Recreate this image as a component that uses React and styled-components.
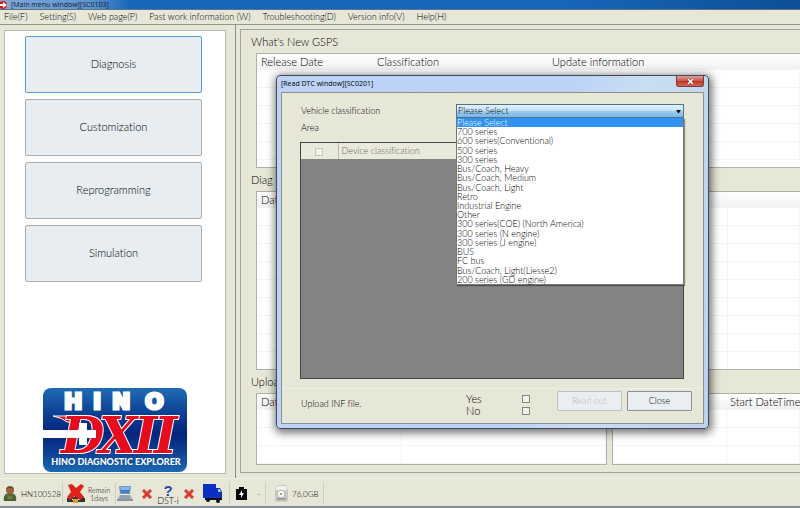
import React, { useState } from "react";
import styled, { createGlobalStyle, css } from "styled-components";

const vehicles = [
  "Please Select",
  "700 series",
  "600 series(Conventional)",
  "500 series",
  "300 series",
  "Bus/Coach, Heavy",
  "Bus/Coach, Medium",
  "Bus/Coach, Light",
  "Retro",
  "Industrial Engine",
  "Other",
  "300 series(COE) (North America)",
  "300 series (N engine)",
  "300 series (J engine)",
  "BUS",
  "FC bus",
  "Bus/Coach, Light(Liesse2)",
  "200 series (GD engine)",
];

const menus = [
  "File(F)",
  "Setting(S)",
  "Web page(P)",
  "Past work information (W)",
  "Troubleshooting(D)",
  "Version info(V)",
  "Help(H)",
];

function ListTable({ columns, rows, label }) {
  return (
    <TableFrame>
      <Table aria-label={label}>
        <colgroup>
          {columns.map((c, i) => (
            <Col key={i} $width={c.width} />
          ))}
        </colgroup>
        <thead>
          <tr>
            {columns.map((c, i) => (
              <th key={i}>{c.title}</th>
            ))}
          </tr>
        </thead>
        <tbody>
          {Array.from({ length: rows }, (_, r) => (
            <tr key={r}>
              {columns.map((c, i) => (
                <td key={i} />
              ))}
            </tr>
          ))}
        </tbody>
      </Table>
    </TableFrame>
  );
}

function Logo() {
  return (
    <LogoSvg viewBox="0 0 144 84" role="img" aria-label="Hino DX2">
      <defs>
        <linearGradient id="logoBg" x1="0" y1="0" x2="0" y2="1">
          <stop offset="0" stopColor="#1f6cb5" />
          <stop offset="0.3" stopColor="#0c3f93" />
          <stop offset="0.55" stopColor="#04247d" />
          <stop offset="0.8" stopColor="#0d4597" />
          <stop offset="1" stopColor="#1c69b2" />
        </linearGradient>
      </defs>
      <rect width="144" height="84" rx="8" fill="url(#logoBg)" />
      <text
        x="21 50 69 102"
        y="21"
        fontFamily="DejaVu Sans"
        fontWeight="700"
        fontSize="22"
        fill="#fff"
        stroke="#fff"
        strokeWidth="3"
      >
        HINO
      </text>
      <path d="M10 28 H36 L31 34 L24 34 Q20 30 10 28 Z" fill="#e60c1e" stroke="#fff" strokeWidth="1" />
      <g
        fontFamily="DejaVu Serif"
        fontWeight="700"
        fontStyle="italic"
        fontSize="50"
        fill="#e60c1e"
        stroke="#fff"
        strokeWidth="2"
        paintOrder="stroke"
      >
        <text x="18" y="65">D</text>
        <text x="56" y="65">X</text>
        <text x="91 111" y="65">II</text>
      </g>
      <path d="M0 42 H36 V35 H44 V42 H53 V50 H44 V57 H36 V50 H0 Z" fill="#fff" />
      <text
        x="73"
        y="77"
        textAnchor="middle"
        fontFamily="Lato"
        fontWeight="900"
        fontSize="9"
        fill="#fff"
      >
        HINO DIAGNOSTIC EXPLORER
      </text>
    </LogoSvg>
  );
}

const UserIcon = () => (
  <svg width="14" height="16" viewBox="0 0 14 16">
    <path d="M1 15 C0 10 2 7 7 7 C12 7 14 10 13 15 Z" fill="#4f6038" />
    <path d="M4 8 L7 11 L10 8 L9 13 H5 Z" fill="#75824a" />
    <circle cx="7" cy="4" r="4" fill="#9a6238" />
    <path d="M3 3 C4 0 10 0 11 3 L9 2 H5 Z" fill="#5d4328" />
  </svg>
);

const NetworkIcon = () => (
  <svg width="20" height="20" viewBox="0 0 20 20">
    <path d="M2 14 H18 M10 12 V17 M4 17 H16" stroke="#3a3532" strokeWidth="2" />
    <rect x="1" y="14" width="5" height="4" fill="#303438" />
    <rect x="14" y="14" width="5" height="4" fill="#303438" />
    <rect x="7" y="15" width="5" height="4" fill="#d8a032" />
    <path d="M2 1 L6 0 L10 4 L15 0 L18 2 L14 8 L18 13 L14 16 L9 12 L4 16 L1 13 L5 8 Z" fill="#e02318" />
  </svg>
);

const LaptopIcon = () => (
  <svg width="16" height="15" viewBox="0 0 16 15">
    <path d="M2 0 H14 L13 8 H3 Z" fill="#7f98b4" />
    <path d="M3 1 H13 L12 7 H4 Z" fill="#3f7fc4" />
    <path d="M3 1 H13 L12 4 H4 Z" fill="#86b6e2" />
    <path d="M2 9 H14 L16 13 H0 Z" fill="#c2cad1" />
    <path d="M0 13 H16 V15 H0 Z" fill="#8796a6" />
    <path d="M3 10 H13 M2 12 H14" stroke="#66788c" strokeWidth="1" />
  </svg>
);

const CrossIcon = () => (
  <svg width="10" height="10" viewBox="0 0 10 10">
    <path d="M1 1 L9 9 M9 1 L1 9" stroke="#dc3a2c" strokeWidth="3" />
  </svg>
);

const TruckIcon = () => (
  <svg width="20" height="19" viewBox="0 0 20 19">
    <path d="M0 0 H13 V14 H0 Z" fill="#0a2fc4" />
    <path d="M13 4 H17 L19 8 V14 H13 Z" fill="#0a2fc4" />
    <path d="M15 5 H17 L18 8 H15 Z" fill="#a8c0ec" />
    <rect x="2" y="14" width="17" height="2" fill="#111" />
    <circle cx="5" cy="16" r="2" fill="#111" />
    <circle cx="15" cy="17" r="2" fill="#111" />
  </svg>
);

const BatteryIcon = () => (
  <svg width="11" height="13" viewBox="0 0 11 13">
    <path d="M3 0 H8 V2 H11 V13 H0 V2 H3 Z" fill="#070707" />
    <path d="M6 3 L3 8 H5 L5 11 L8 6 H6 Z" fill="#fff" />
  </svg>
);

const DiskIcon = () => (
  <svg width="13" height="17" viewBox="0 0 13 17">
    <path d="M2 0 H11 L13 5 V15 L12 17 H1 L0 15 V5 Z" fill="#c9c9c4" />
    <path d="M2 1 H11 L12 5 H1 Z" fill="#f2f2ee" />
    <circle cx="6" cy="9" r="4" fill="#f4f4f1" stroke="#b4b4b0" />
    <circle cx="6" cy="9" r="1" fill="#83837f" />
    <path d="M2 14 H11" stroke="#a0a09c" strokeWidth="2" />
  </svg>
);

const AppIcon = () => (
  <svg width="8" height="8" viewBox="0 0 8 8">
    <circle cx="3" cy="4" r="4" fill="#d51d24" />
    <path d="M0 3 H3 V1 L7 4 L3 7 V5 H0 Z" fill="#fff" />
  </svg>
);

function ReadDtcDialog() {
  const [vehicle, setVehicle] = useState(vehicles[0]);

  return (
    <Dialog role="dialog" aria-label="Read DTC window">
      <DialogTitle>
        <span>[Read DTC window][SC0201]</span>
        <CloseX type="button" aria-label="Close window">
          <svg width="7" height="5" viewBox="0 0 8 6">
            <path d="M1 0 L7 6 M7 0 L1 6" stroke="#6c2a26" strokeWidth="3" />
            <path d="M1 0 L7 6 M7 0 L1 6" stroke="#fff" strokeWidth="2" />
          </svg>
        </CloseX>
      </DialogTitle>
      <DialogBody>
        <FormRow>
          <label htmlFor="vehicle">Vehicle classification</label>
          <Combo>
            <Select
              id="vehicle"
              value={vehicle}
              onChange={(e) => setVehicle(e.target.value)}
            >
              {vehicles.map((v) => (
                <option key={v}>{v}</option>
              ))}
            </Select>
            <Arrow viewBox="0 0 5 3">
              <path d="M0 0 H5 L3 3 H2 Z" fill="#111" />
            </Arrow>
            <Options role="listbox" aria-label="Vehicle classification">
              {vehicles.map((v) => (
                <Option
                  key={v}
                  role="option"
                  aria-selected={v === vehicle}
                  $active={v === vehicle}
                  onClick={() => setVehicle(v)}
                >
                  {v}
                </Option>
              ))}
            </Options>
          </Combo>
        </FormRow>
        <AreaLabel>Area</AreaLabel>
        <DeviceGrid>
          <DeviceTable>
            <thead>
              <tr>
                <th>
                  <Check type="checkbox" aria-label="Select all devices" disabled />
                </th>
                <th>Device classification</th>
              </tr>
            </thead>
          </DeviceTable>
        </DeviceGrid>
        <DialogFooter>
          <span>Upload INF file.</span>
          <Answers>
            <label>
              Yes <Check type="checkbox" />
            </label>
            <label>
              No <Check type="checkbox" />
            </label>
          </Answers>
          <DialogButton type="button" disabled>
            Read out
          </DialogButton>
          <DialogButton type="button">Close</DialogButton>
        </DialogFooter>
      </DialogBody>
    </Dialog>
  );
}

function App() {
  return (
    <Window>
      <GlobalStyle />
      <TitleBar>
        <AppIcon />
        <span>[Main menu window][SC0103]</span>
      </TitleBar>
      <MenuBar>
        {menus.map((m) => (
          <MenuItem key={m} type="button">
            {m}
          </MenuItem>
        ))}
      </MenuBar>
      <Main>
        <Side>
          <SidePanel>
            <MainButton type="button" $selected>
              Diagnosis
            </MainButton>
            <MainButton type="button">Customization</MainButton>
            <MainButton type="button">Reprogramming</MainButton>
            <MainButton type="button">Simulation</MainButton>
            <Logo />
          </SidePanel>
        </Side>
        <Content>
          <Heading>What's New GSPS</Heading>
          <Section $grow={115}>
            <ListTable
              label="What's New GSPS"
              rows={5}
              columns={[
                { title: "Release Date", width: 116 },
                { title: "Classification", width: 175 },
                { title: "Update information" },
              ]}
            />
          </Section>
          <Heading>Diag</Heading>
          <Section $grow={179}>
            <ListTable
              label="Diagnosis"
              rows={9}
              columns={[{ title: "Date", width: 470 }, { title: "" }]}
            />
          </Section>
          <Heading>Upload</Heading>
          <Section $grow={72}>
            <ListTable
              label="Upload"
              rows={3}
              columns={[{ title: "Date", width: 144 }, { title: "" }]}
            />
            <ListTable
              label="Upload times"
              rows={3}
              columns={[{ title: "", width: 113 }, { title: "Start DateTime" }]}
            />
          </Section>
        </Content>
      </Main>
      <StatusBar>
        <Status $width={63} $pad={3}>
          <UserIcon />
          <span>HN100528</span>
        </Status>
        <Status $width={53} $pad={3} $gap={2}>
          <NetworkIcon />
          <Remain>
            Remain
            <br />
            1days
          </Remain>
        </Status>
        <Status $width={114} $pad={1} $gap={9}>
          <LaptopIcon />
          <CrossIcon />
          <Dst>
            <b>?</b>
            <span>DST-i</span>
          </Dst>
          <CrossIcon />
          <TruckIcon />
        </Status>
        <Status $width={36} $pad={6} $gap={10}>
          <BatteryIcon />
          <span>-</span>
        </Status>
        <Status $width={58} $pad={9}>
          <DiskIcon />
          <span>76,0GB</span>
        </Status>
      </StatusBar>
      <ReadDtcDialog />
    </Window>
  );
}

const GlobalStyle = createGlobalStyle`
  * {
    box-sizing: border-box;
  }

  body {
    margin: 0;
    overflow: hidden;
  }

  body,
  button,
  select {
    font-family: Lato, "Liberation Sans", sans-serif;
    font-weight: 300;
    font-size: 9px;
    font-variant-ligatures: none;
    line-height: 12px;
    color: #000;
  }
`;

const Window = styled.div`
  position: relative;
  display: flex;
  flex-direction: column;
  min-height: 100vh;
  background: #e7e7d8;
  border-bottom: 2px solid #7d8f9c;
  overflow: hidden;
`;

const TitleBar = styled.header`
  display: flex;
  align-items: center;
  gap: 3px;
  height: 10px;
  border-bottom: 1px solid #56748c;
  background: linear-gradient(90deg, #7fa9d8 0, #5f93cf 90px, #1766ba 130px, #1766bc 70%, #0d4f94);
  font-family: "Open Sans", sans-serif;
  font-weight: 400;
  font-size: 7px;
  line-height: 9px;
  color: #0c1c30;
`;

const MenuBar = styled.nav`
  display: flex;
  gap: 12px;
  height: 15px;
  padding-left: 4px;
  border-bottom: 1px solid #96968c;
`;

const MenuItem = styled.button`
  padding: 0;
  border: 0;
  background: none;
  white-space: nowrap;
`;

const Main = styled.div`
  flex: 1;
  display: flex;
  min-height: 0;
`;

const Side = styled.aside`
  display: flex;
  width: 236px;
  flex-shrink: 0;
  padding: 5px 9px 4px 4px;
  border-right: 1px solid #8d8d84;
`;

const SidePanel = styled.div`
  flex: 1;
  display: flex;
  flex-direction: column;
  gap: 6px;
  padding: 5px 23px 1px 20px;
  border: 1px solid #b9b9b2;
  background: #fff;
`;

const MainButton = styled.button`
  height: 57px;
  padding-bottom: 3px;
  border: 1px solid ${(p) => (p.$selected ? "#5b9bd3" : "#a9adb0")};
  border-radius: 2px;
  background: #e7edf1;
  font-size: 11px;
`;

const LogoSvg = styled.svg`
  width: 144px;
  height: 84px;
  margin-top: auto;
  margin-left: 18px;
`;

const Content = styled.main`
  flex: 1;
  min-width: 0;
  display: flex;
  flex-direction: column;
  margin: 4px 0 5px 4px;
  padding: 0 0 7px 15px;
  border: 1px solid #a3a399;
  border-right: 0;
`;

const Heading = styled.h2`
  margin: 0 0 0 -5px;
  font-size: 11px;
  font-weight: 300;
  line-height: 23px;
`;

const Section = styled.section`
  flex: ${(p) => p.$grow} 1 0;
  display: flex;
  gap: 5px;
  min-height: 0;
`;

const TableFrame = styled.div`
  flex: 351 1 0;
  min-width: 0;
  border: 1px solid #b0b0a8;
  border-right: 0;
  background: #fff;
  overflow: hidden;

  &:not(:last-child) {
    border-right: 1px solid #b0b0a8;
  }

  & + & {
    flex-grow: 188;
  }
`;

const Table = styled.table`
  width: 100%;
  table-layout: fixed;
  border-collapse: collapse;

  th {
    height: 15px;
    padding: 0 0 0 4px;
    background: linear-gradient(#fff, #f1f1f1);
    font-size: 11px;
    font-weight: 300;
    line-height: 15px;
    text-align: left;
    white-space: nowrap;
  }

  td {
    height: 18px;
    padding: 0;
    border: 1px solid #f4f4f4;
    border-left: 0;
  }
`;

const Col = styled.col`
  width: ${(p) => (p.$width ? p.$width + "px" : "auto")};
`;

const StatusBar = styled.footer`
  display: flex;
  height: 28px;
  padding: 3px 0 1px;
  border-top: 1px solid #f0f0e4;
`;

const Status = styled.div`
  display: flex;
  align-items: center;
  gap: ${(p) => p.$gap || 4}px;
  width: ${(p) => p.$width}px;
  padding-left: ${(p) => p.$pad}px;
  border-right: 1px solid #cfcfc2;
  font-size: 8px;
  white-space: nowrap;

  svg {
    flex-shrink: 0;
  }
`;

const Remain = styled.span`
  font-size: 7px;
  line-height: 8px;
  text-align: center;
`;

const Dst = styled.span`
  display: flex;
  flex-direction: column;
  align-items: center;
  align-self: flex-end;
  width: 24px;
  margin: 0 -5px;

  b {
    font-family: "Liberation Sans", sans-serif;
    font-size: 15px;
    font-weight: 700;
    line-height: 12px;
    color: #27489c;
  }

  span {
    font-size: 9px;
    line-height: 8px;
  }
`;

const Dialog = styled.div`
  position: absolute;
  top: 75px;
  left: 276px;
  width: 433px;
  padding: 0 4px 4px;
  border: 1px solid #3f4c58;
  border-radius: 4px;
  background: linear-gradient(100deg, #bdd2f5, #bcd3f8 60%, #c9def0 75%, #bcd1ee);
  box-shadow: 1px 2px 8px 2px rgba(0, 0, 0, 0.55);
`;

const DialogTitle = styled.div`
  display: flex;
  justify-content: space-between;
  align-items: flex-start;
  height: 16px;
  font-family: "Open Sans", sans-serif;
  font-weight: 400;
  font-size: 7px;
  line-height: 16px;
`;

const CloseX = styled.button`
  display: flex;
  align-items: center;
  justify-content: center;
  width: 28px;
  height: 11px;
  padding: 0;
  border: 1px solid #7c3a38;
  border-top: 0;
  border-radius: 0 0 3px 3px;
  background: linear-gradient(#dba09a, #cd5b50 45%, #b92f22 50%, #d2695a);
`;

const DialogBody = styled.div`
  padding-top: 11px;
  border: 1px solid #8b9090;
  background: #e7e7d8;
`;

const FormRow = styled.div`
  display: flex;
  justify-content: space-between;
  padding: 0 19px;
  line-height: 14px;
`;

const Combo = styled.div`
  position: relative;
  width: 228px;
`;

const Select = styled.select`
  appearance: none;
  display: block;
  width: 100%;
  height: 14px;
  padding: 0 1px;
  border: 1px solid #52718a;
  border-radius: 0;
  background: linear-gradient(#e3f2fc, #c3e1f7 48%, #9ccdf0 52%, #79b7e4);
`;

const Arrow = styled.svg`
  position: absolute;
  top: 6px;
  right: 3px;
  width: 5px;
  height: 3px;
  pointer-events: none;
`;

const Options = styled.ul`
  position: absolute;
  top: 14px;
  left: 0;
  right: 0;
  z-index: 1;
  display: grid;
  grid-auto-rows: 1fr;
  height: 167px;
  margin: 0;
  padding: 0;
  border: 1px solid #777;
  border-top: 0;
  background: #fff;
  box-shadow: 1px 1px 1px rgba(0, 0, 0, 0.4);
  list-style: none;
`;

const Option = styled.li`
  line-height: 9px;
  ${(p) =>
    p.$active &&
    css`
      background: #2f93f3;
      color: #fff;
    `}
`;

const AreaLabel = styled.div`
  margin: 3px 19px 0;
  line-height: 14px;
`;

const DeviceGrid = styled.div`
  height: 237px;
  margin: 7px 19px 0 18px;
  border: 1px solid #444;
  background: #848484;
`;

const DeviceTable = styled.table`
  width: 100%;
  border-collapse: collapse;
  background: #e9e9dc;

  th {
    height: 16px;
    padding: 0 0 0 3px;
    font-weight: 300;
    text-align: left;
    color: #66665c;
  }

  th:first-child {
    width: 37px;
    padding: 0;
    border-right: 1px solid #b9b9ae;
    text-align: center;
  }
`;

const Check = styled.input`
  appearance: none;
  display: inline-block;
  width: 8px;
  height: 8px;
  margin: 0;
  border: 1px solid ${(p) => (p.disabled ? "#c5c5bc" : "#85857c")};
  background: #f3f3ee;
  vertical-align: middle;
`;

const DialogFooter = styled.div`
  display: flex;
  align-items: flex-start;
  gap: 5px;
  margin-top: 9px;
  padding: 2px 11px 6px 19px;
  border-top: 1px solid #efefe4;

  > span {
    flex: 1;
    padding-top: 7px;
  }
`;

const Answers = styled.div`
  width: 64px;
  margin-right: 22px;
  padding-top: 2px;

  label {
    display: flex;
    justify-content: space-between;
    align-items: center;
    font-size: 11px;
    line-height: 12px;
  }
`;

const DialogButton = styled.button`
  width: 65px;
  height: 20px;
  padding: 0;
  border: 1px solid #8d9092;
  border-radius: 1px;
  background: #e9eef1;

  &:disabled {
    border-color: #bcc2c4;
    color: #b4babd;
  }
`;

export default App;
